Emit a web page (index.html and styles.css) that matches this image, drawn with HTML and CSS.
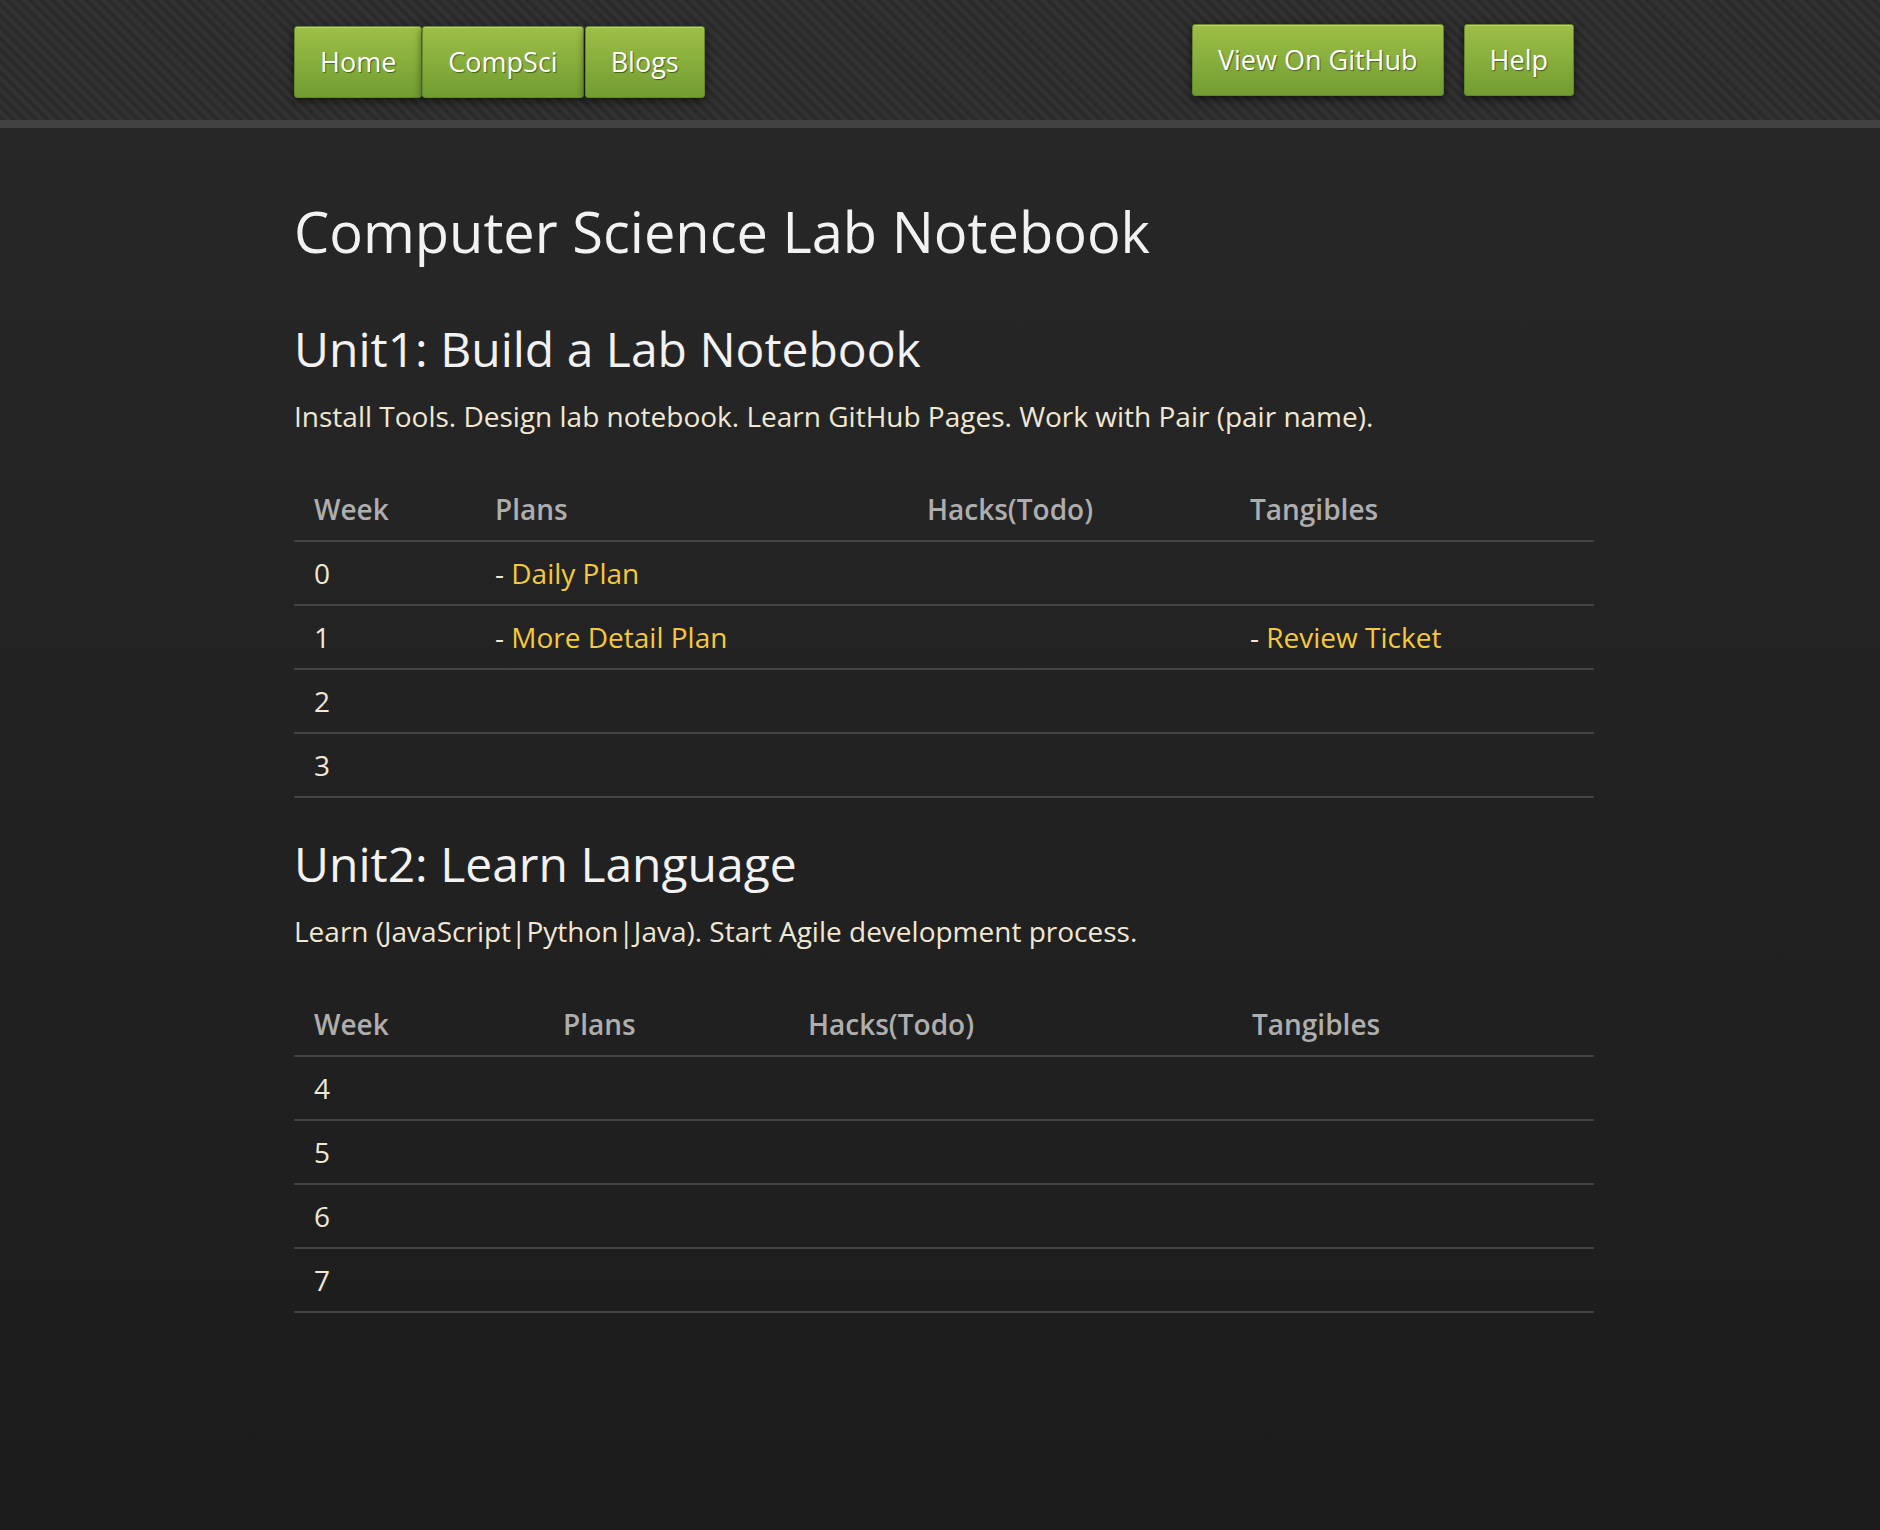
FILE: index.html
```html
<!DOCTYPE html>
<html lang="en">
<head>
<meta charset="utf-8">
<title>Computer Science Lab Notebook</title>
<link rel="stylesheet" href="styles.css">
</head>
<body>
<header class="site-header">
  <div class="wrap header-inner">
    <nav class="nav-left">
      <a class="btn" href="#">Home</a>
      <a class="btn" href="#">CompSci</a>
      <a class="btn" href="#">Blogs</a>
    </nav>
    <nav class="nav-right">
      <a class="btn" href="#">View On GitHub</a>
      <a class="btn" href="#">Help</a>
    </nav>
  </div>
</header>
<main class="main">
  <div class="wrap content">
    <h1 class="title">Computer Science Lab Notebook</h1>

    <h2 class="unit">Unit1: Build a Lab Notebook</h2>
    <p class="desc">Install Tools. Design lab notebook. Learn GitHub Pages. Work with Pair (pair name).</p>
    <table class="weeks t1">
      <colgroup><col class="c1"><col class="c2"><col class="c3"><col class="c4"></colgroup>
      <thead>
        <tr><th>Week</th><th>Plans</th><th>Hacks(Todo)</th><th>Tangibles</th></tr>
      </thead>
      <tbody>
        <tr><td>0</td><td>- <a href="#">Daily Plan</a></td><td></td><td></td></tr>
        <tr><td>1</td><td>- <a href="#">More Detail Plan</a></td><td></td><td>- <a href="#">Review Ticket</a></td></tr>
        <tr><td>2</td><td></td><td></td><td></td></tr>
        <tr><td>3</td><td></td><td></td><td></td></tr>
      </tbody>
    </table>

    <h2 class="unit">Unit2: Learn Language</h2>
    <p class="desc">Learn (JavaScript|Python|Java). Start Agile development process.</p>
    <table class="weeks t2">
      <colgroup><col class="c1"><col class="c2"><col class="c3"><col class="c4"></colgroup>
      <thead>
        <tr><th>Week</th><th>Plans</th><th>Hacks(Todo)</th><th>Tangibles</th></tr>
      </thead>
      <tbody>
        <tr><td>4</td><td></td><td></td><td></td></tr>
        <tr><td>5</td><td></td><td></td><td></td></tr>
        <tr><td>6</td><td></td><td></td><td></td></tr>
        <tr><td>7</td><td></td><td></td><td></td></tr>
      </tbody>
    </table>
  </div>
</main>
</body>
</html>
```
FILE: styles.css
```css
* { box-sizing: border-box; }

html, body {
  margin: 0;
  padding: 0;
}

body {
  font-family: "Open Sans", "Noto Sans", sans-serif;
  color: #f0e7d5;
  background: #1d1d1d;
  min-height: 1530px;
}

.wrap {
  width: 1308px;
  margin: 0 auto;
  padding-left: 8px;
}

/* Header */
.site-header {
  height: 128px;
  background:
    repeating-linear-gradient(45deg, #2a2a2a 0px, #2a2a2a 4px, #323232 4px, #323232 8px);
  border-bottom: 8px solid #424242;
}

.header-inner {
  display: flex;
  justify-content: space-between;
  align-items: flex-start;
  padding-top: 24px;
  padding-right: 20px;
}

.nav-left {
  display: flex;
  margin-top: 2px;
}

.nav-right {
  display: flex;
  gap: 20px;
}

.btn {
  display: block;
  height: 72px;
  line-height: 70px;
  padding: 0 25px;
  font-size: 27px;
  font-weight: 400;
  color: #ffffff;
  text-decoration: none;
  text-shadow: 1px 1px 1px rgba(0, 0, 0, 0.45);
  background: linear-gradient(#9ebf47, #719d31);
  border: 1px solid #62882a;
  border-radius: 3px;
  box-shadow: inset 0 1px 0 #b5d26c, 0 3px 8px rgba(0, 0, 0, 0.55);
}

.nav-left .btn:last-child { margin-left: 1px; }

/* Main */
.main {
  background: linear-gradient(#272727, #1c1c1c);
  min-height: 1402px;
}

.content {
  padding-top: 65px;
  padding-bottom: 40px;
}

.title {
  margin: 0 0 47px 0;
  font-size: 56px;
  font-weight: 400;
  line-height: normal;
  color: #f2f2f2;
}

.unit {
  margin: 0 0 16px 0;
  font-size: 48px;
  font-weight: 400;
  line-height: normal;
  color: #f2f2f2;
}

.desc {
  margin: 0 0 42px 0;
  font-size: 28px;
  line-height: normal;
}

.weeks {
  width: 1300px;
  table-layout: fixed;
  border-collapse: collapse;
  margin: 0 0 33px 0;
  font-size: 28px;
}

.weeks th,
.weeks td {
  text-align: left;
  padding: 12px 20px;
  height: 64px;
  line-height: 38px;
  border-bottom: 2px solid #444444;
  vertical-align: middle;
}

.weeks th {
  font-weight: 600;
  color: #aeaeae;
}

.weeks td {
  color: #f0e7d5;
}

.weeks a {
  color: #f6c93b;
  text-decoration: none;
}

.t1 .c1 { width: 181px; }
.t1 .c2 { width: 432px; }
.t1 .c3 { width: 323px; }
.t1 .c4 { width: 364px; }

.t2 .c1 { width: 249px; }
.t2 .c2 { width: 245px; }
.t2 .c3 { width: 444px; }
.t2 .c4 { width: 362px; }
```
